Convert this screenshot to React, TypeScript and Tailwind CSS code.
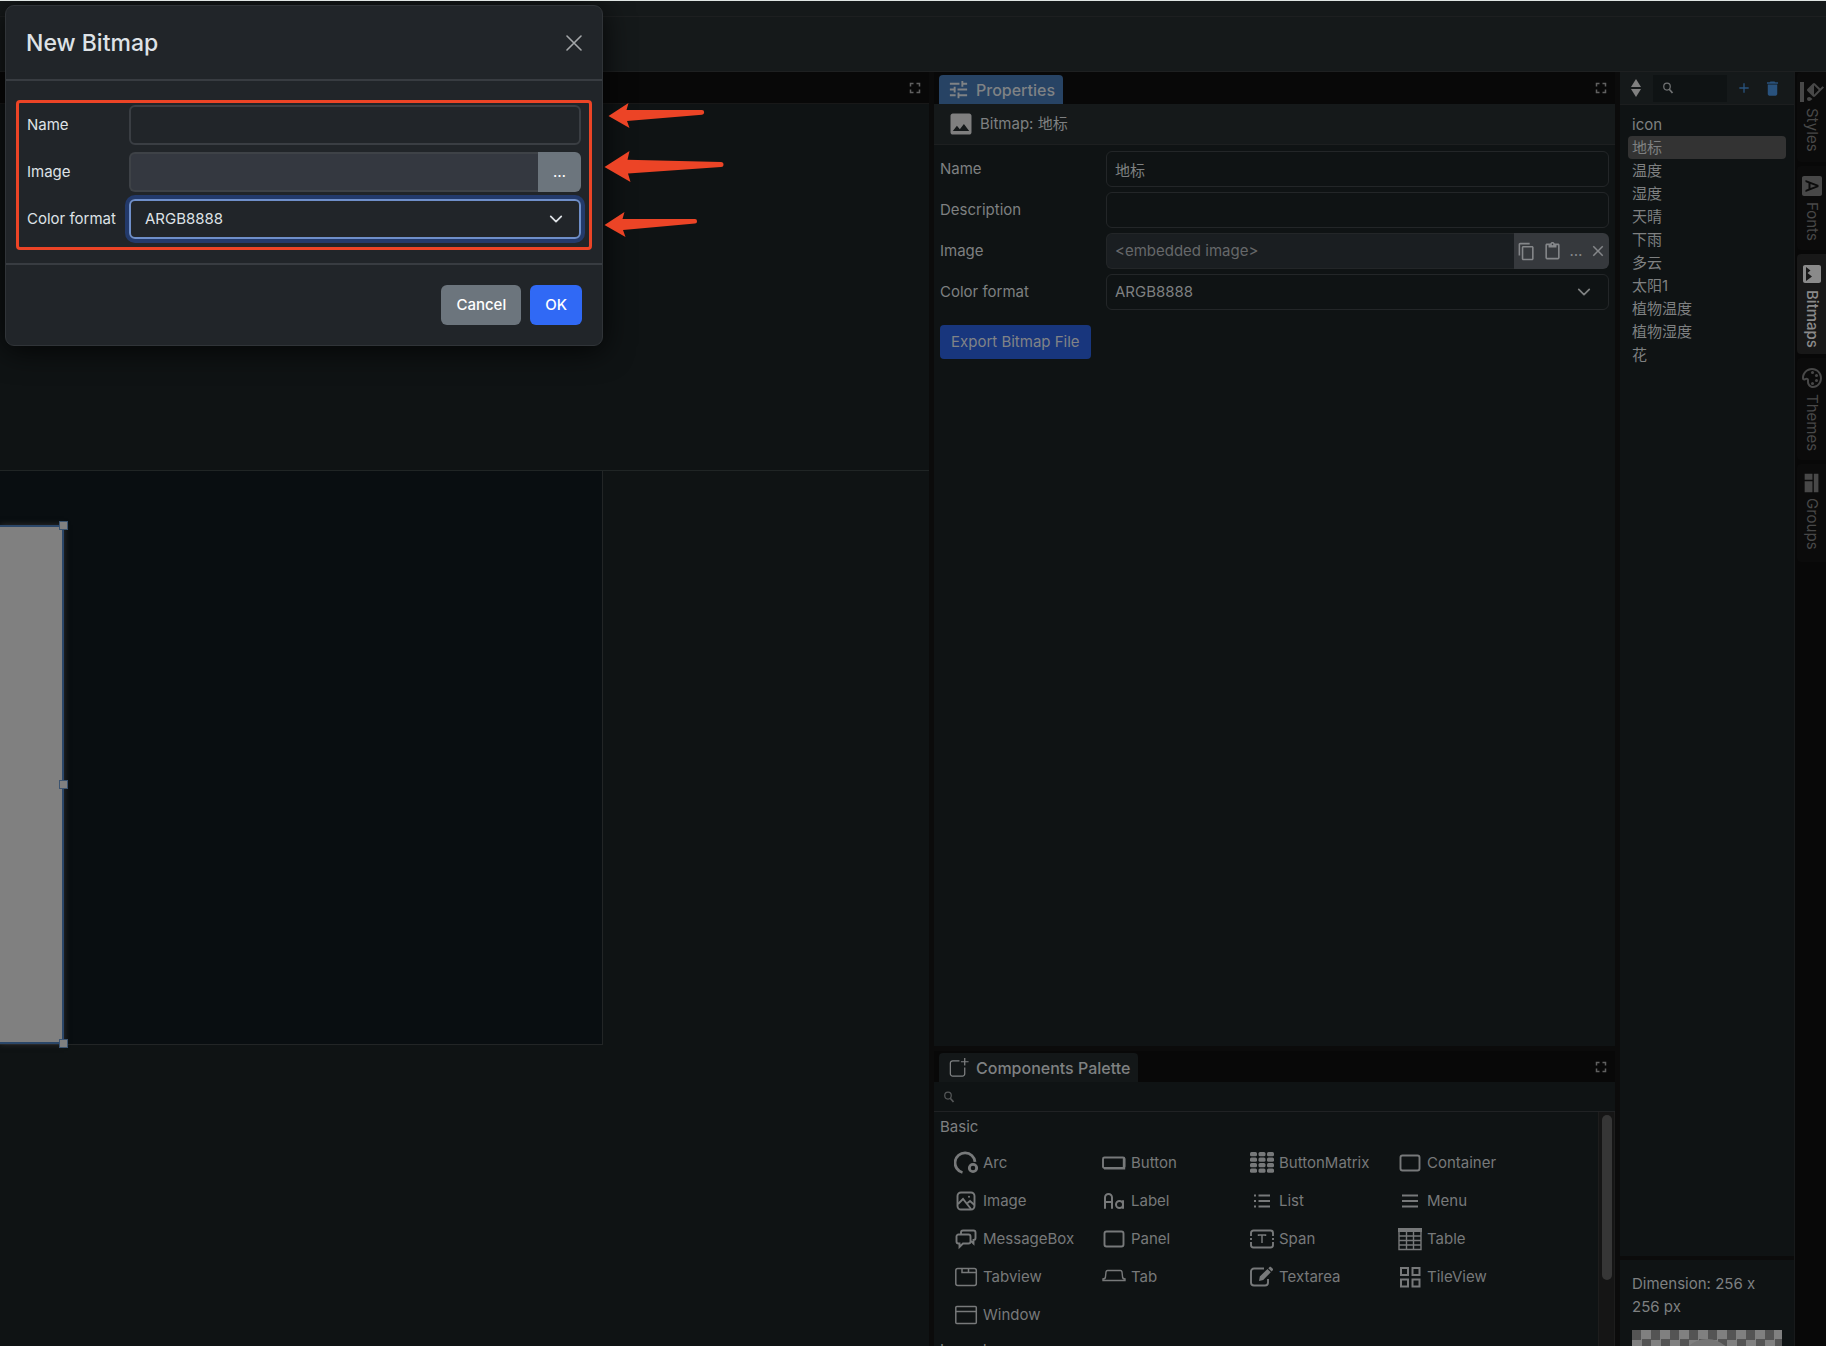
import { useState, type ReactNode } from "react"
import {
    MdAdd,
    MdClose,
    MdContentCopy,
    MdContentPaste,
    MdDelete,
    MdFontDownload,
    MdFormatColorFill,
    MdFullscreen,
    MdImage,
    MdOutlinePalette,
    MdTune,
} from "react-icons/md"
import { TbLetterCase } from "react-icons/tb"

const bitmaps = ["icon", "地标", "温度", "湿度", "天晴", "下雨", "多云", "太阳1", "植物温度", "植物湿度", "花"]

const Icon = ({ children, className = "size-6" }: { children: ReactNode; className?: string }) => (
    <svg viewBox="0 0 24 24" fill="none" stroke="currentColor" strokeWidth="1.9" className={`shrink-0 ${className}`} aria-hidden="true">
        {children}
    </svg>
)

const SearchIcon = ({ className }: { className: string }) => (
    <Icon className={className}>
        <ellipse cx="10" cy="9" rx="6.5" ry="7" strokeWidth="2.5" />
        <path d="M14.5 14.5 21 22" strokeWidth="3.5" />
    </Icon>
)

const Chevron = ({ className }: { className: string }) => (
    <svg viewBox="0 0 16 16" fill="none" stroke="currentColor" strokeWidth="2" strokeLinecap="round" strokeLinejoin="round" className={className} aria-hidden="true">
        <path d="m2 5 6 6 6-6" />
    </svg>
)

const GroupsIcon = () => (
    <svg viewBox="0 0 24 24" fill="currentColor" className="size-[22px] rotate-90" aria-hidden="true">
        <path d="M2 5h20v5H2zM2 11.500h6.500V20H2zM10 11.500h12V20H10z" />
    </svg>
)

const palette: { name: string; icon: ReactNode }[] = [
    {
        name: "Arc",
        icon: (
            <Icon>
                <path d="M8.500 21.500A10 10 0 1 1 21 10.800" strokeWidth="2.800" />
                <circle cx="19" cy="17" r="3.700" strokeWidth="2.800" />
            </Icon>
        ),
    },
    {
        name: "Button",
        icon: (
            <Icon>
                <rect x="1" y="6.500" width="21.500" height="10.500" rx="1.500" />
                <path d="M2 17.200h20V7" strokeWidth="2.400" />
            </Icon>
        ),
    },
    {
        name: "ButtonMatrix",
        icon: (
            <Icon>
                {[1, 6.5, 12, 17.5].map((y) =>
                    [0, 8.5, 17].map((x) => <rect key={`${x}-${y}`} x={x} y={y} width="7" height="4.200" rx="1.500" fill="currentColor" stroke="none" />)
                )}
            </Icon>
        ),
    },
    {
        name: "Container",
        icon: (
            <Icon>
                <rect x="2.500" y="4.500" width="19" height="15" rx="2" />
            </Icon>
        ),
    },
    {
        name: "Image",
        icon: (
            <Icon>
                <rect x="3.500" y="3.500" width="17" height="17" rx="3.500" />
                <circle cx="15" cy="7.800" r="1" fill="currentColor" stroke="none" />
                <path d="m4 15 5-5 8 10M13.500 14l2.500-2 4.500 4" />
            </Icon>
        ),
    },
    { name: "Label", icon: <TbLetterCase className="size-6 shrink-0" /> },
    {
        name: "List",
        icon: (
            <Icon>
                <path d="M8.500 6.500H20M8.500 12H20M8.500 17.500H20" />
                <path d="M4 6.500h2M4 12h2M4 17.500h2" strokeWidth="2" />
            </Icon>
        ),
    },
    {
        name: "Menu",
        icon: (
            <Icon>
                <path d="M4 6.500h16M4 12h16M4 17.500h16" />
            </Icon>
        ),
    },
    {
        name: "MessageBox",
        icon: (
            <Icon>
                <path d="M4.500 7.500h10a2 2 0 0 1 2 2v5a2 2 0 0 1-2 2H9L5.500 20v-3.500h-1a2 2 0 0 1-2-2v-5a2 2 0 0 1 2-2z" />
                <path d="M7 7V5.500a2 2 0 0 1 2-2h10.500a2 2 0 0 1 2 2V11a2 2 0 0 1-2 2v3.500L17 14" />
            </Icon>
        ),
    },
    {
        name: "Panel",
        icon: (
            <Icon>
                <rect x="2.500" y="4.500" width="19" height="15" rx="2" />
            </Icon>
        ),
    },
    {
        name: "Span",
        icon: (
            <Icon>
                <path d="M1 9V6a2.500 2.500 0 0 1 2.500-2.500h17A2.500 2.500 0 0 1 23 6v3M1 15v3a2.500 2.500 0 0 0 2.500 2.500h17A2.500 2.500 0 0 0 23 18v-3M1 11v2M23 11v2" />
                <path d="M8.500 9V8h7v1M12 8v8" strokeWidth="1.500" />
            </Icon>
        ),
    },
    {
        name: "Table",
        icon: (
            <Icon>
                <path d="M0 1h24v4H0z" fill="currentColor" stroke="none" />
                <path d="M1 2v20.500h22V2M1 9h22M1 13.500h22M1 18h22M8.500 4v18M15.500 4v18" strokeWidth="1.400" />
            </Icon>
        ),
    },
    {
        name: "Tabview",
        icon: (
            <Icon>
                <rect x="1.800" y="3.500" width="20.500" height="17" rx="2" strokeWidth="1.500" />
                <path d="M8 4v3.500h14M14.500 4v3.500" strokeWidth="1.500" />
            </Icon>
        ),
    },
    {
        name: "Tab",
        icon: (
            <Icon>
                <path d="M1 15.500h22v-1.500c-2 0-2.500-1-2.500-2.500L20 7c-.2-1-.8-1.500-1.500-1.500h-13C4.700 5.500 4.200 6 4 7l-.5 4.500C3.500 13 3 14 1 14z" strokeWidth="1.400" />
            </Icon>
        ),
    },
    {
        name: "Textarea",
        icon: (
            <Icon>
                <path d="M14 3.500H4A3 3 0 0 0 1 6.500v11a3 3 0 0 0 3 3h11a3 3 0 0 0 3-3V14" />
                <path d="m9 16 .8-4.500L17.500 4l3.300 3.300-7.600 7.700zM18.300 3.200l1-1c.6-.6 1.300-.6 1.900 0l1.400 1.400c.6.600.6 1.300 0 1.900l-1 1z" fill="currentColor" stroke="none" />
            </Icon>
        ),
    },
    {
        name: "TileView",
        icon: (
            <Icon>
                {[3, 14.5].map((y) => [3, 14.5].map((x) => <rect key={`${x}-${y}`} x={x} y={y} width="7" height="7" strokeWidth="2" />))}
            </Icon>
        ),
    },
    {
        name: "Window",
        icon: (
            <Icon>
                <rect x="1.800" y="3.500" width="20.500" height="17" rx="1" strokeWidth="1.500" />
                <path d="M2 8.500h20" strokeWidth="1.500" />
            </Icon>
        ),
    },
]

const sideTabs = [
    { name: "Styles", size: "h-[90px]", icon: <MdFormatColorFill className="size-6 rotate-90" /> },
    { name: "Fonts", size: "h-[84px]", icon: <MdFontDownload className="size-6 rotate-90" /> },
    { name: "Bitmaps", size: "h-[100px]", icon: <MdImage className="size-6 rotate-90" /> },
    { name: "Themes", size: "h-[102px]", icon: <MdOutlinePalette className="size-6 rotate-90" /> },
    { name: "Groups", size: "h-[98px]", icon: <GroupsIcon /> },
]

const MaximizeButton = () => (
    <button aria-label="Maximize" className="mr-[5px] text-[#606060]">
        <MdFullscreen className="size-[18px]" />
    </button>
)

const EditorPanel = () => (
    <section className="flex min-w-0 flex-1 flex-col">
        <div className="flex h-8 shrink-0 items-center justify-end border-b border-[#181818] bg-[#080808]">
            <MaximizeButton />
        </div>
        <div className="min-h-0 flex-1 overflow-hidden pt-[366px]">
            <div className="border-t border-[#202525]">
                <div className="h-[574px] w-[603px] border-r border-b border-[#222526] bg-[#090e11] pt-[54px]">
                    <div className="relative h-[519px] w-16 border-y-2 border-r-2 border-[#2b4769] bg-[#808080] shadow-[0_0_6px_#303030]">
                        <i className="absolute -top-[6px] -right-[6px] size-[9px] border border-[#3c5470] bg-[#808080]" />
                        <i className="absolute top-[253px] -right-[6px] size-[9px] border border-[#3c5470] bg-[#808080]" />
                        <i className="absolute -right-[6px] -bottom-[6px] size-[9px] border border-[#3c5470] bg-[#808080]" />
                    </div>
                </div>
            </div>
        </div>
    </section>
)

const field = "h-9 w-full min-w-0 rounded-md border border-[#232628] bg-transparent px-2 outline-none"

const PropertiesPanel = () => {
    const [name, setName] = useState("地标")

    return (
        <section className="flex min-h-0 flex-1 flex-col">
            <div className="flex h-8 shrink-0 items-end justify-between bg-[#080808] pl-[5px]">
                <button className="flex h-[29px] items-center gap-[6px] rounded-t-sm bg-[#274364] px-2 text-base font-medium text-[#7f8285]">
                    <MdTune className="size-[23px]" />
                    Properties
                </button>
                <div className="flex h-full items-center">
                    <MaximizeButton />
                </div>
            </div>
            <div className="flex h-[41px] shrink-0 items-center gap-[5px] border-b border-[#1d1f20] bg-[#15191a] px-[13px]">
                <MdImage className="size-7 text-[#7f7f7f]" />
                Bitmap: 地标
            </div>
            <div className="px-[6px] pt-[6px]">
                <div className="grid grid-cols-[166px_1fr] items-center gap-y-[5px]">
                    <label htmlFor="prop-name">Name</label>
                    <input id="prop-name" className={field} value={name} onChange={(e) => setName(e.target.value)} />
                    <label htmlFor="prop-description">Description</label>
                    <input id="prop-description" className={field} />
                    <label htmlFor="prop-image">Image</label>
                    <div className="flex h-9">
                        <input
                            id="prop-image"
                            readOnly
                            value="<embedded image>"
                            className="min-w-0 flex-1 rounded-l-md border border-r-0 border-[#232628] bg-[#1a1e21] px-2 text-[#66686a] outline-none"
                        />
                        <div className="flex items-center gap-1 rounded-r-md bg-[#36393d] px-[2px] text-[#85878a]">
                            <button aria-label="Copy" className="flex w-[21px] justify-center">
                                <MdContentCopy className="size-[19px]" />
                            </button>
                            <button aria-label="Paste" className="flex w-[22px] justify-center">
                                <MdContentPaste className="size-[19px]" />
                            </button>
                            <button aria-label="Browse" className="w-[18px]">…</button>
                            <button aria-label="Clear" className="flex w-[18px] justify-center">
                                <MdClose className="size-[18px]" />
                            </button>
                        </div>
                    </div>
                    <label htmlFor="prop-format">Color format</label>
                    <div className="relative">
                        <select id="prop-format" className={`${field} appearance-none`}>
                            <option>ARGB8888</option>
                        </select>
                        <Chevron className="pointer-events-none absolute top-[11px] right-[18px] size-[14px]" />
                    </div>
                </div>
                <button className="mt-[15px] h-[34px] rounded-sm bg-[#18367d] px-[11px] text-[#808387]">Export Bitmap File</button>
            </div>
        </section>
    )
}

const ComponentsPalette = () => (
    <section className="flex h-[295px] shrink-0 flex-col">
        <div className="flex h-[31px] shrink-0 items-end justify-between bg-[#080808] pl-[5px]">
            <button className="flex h-[29px] items-center gap-[6px] rounded-t-sm bg-[#131718] px-2 text-base font-medium text-[#7f8182]">
                <Icon className="size-[23px]">
                    <path d="M13 5H6a2.500 2.500 0 0 0-2.500 2.500v11A2.500 2.500 0 0 0 6 21h10a2.500 2.500 0 0 0 2.500-2.500V12M18.500 2v8M14.500 6h8" strokeWidth="1.300" />
                </Icon>
                Components Palette
            </button>
            <div className="flex h-full items-center">
                <MaximizeButton />
            </div>
        </div>
        <label className="flex h-[30px] shrink-0 items-center gap-2 border-b border-[#202224] pl-[9px]">
            <SearchIcon className="size-3 text-[#555758]" />
            <input aria-label="Search components" className="min-w-0 flex-1 bg-transparent outline-none" />
        </label>
        <div className="flex min-h-0 flex-1">
            <div className="min-w-0 flex-1 overflow-hidden px-[6px] pt-[3px]">
                <h3 className="h-[29px] leading-[23px]">Basic</h3>
                <div className="grid grid-cols-[repeat(4,148px)] pl-[14px]">
                    {palette.map((item) => (
                        <button key={item.name} className="flex h-[38px] items-center gap-[5px] text-[#77797a]">
                            {item.icon}
                            {item.name}
                        </button>
                    ))}
                </div>
                <h3 className="pt-1 leading-[23px]">Layout</h3>
            </div>
            <div className="w-[17px] border-x border-[#1d1d1d] bg-[#151515] px-[3px] pt-[3px]">
                <div className="h-[165px] w-[10px] rounded-full bg-[#363636]" />
            </div>
        </div>
    </section>
)

const BitmapsList = () => {
    const [selected, setSelected] = useState("地标")

    return (
        <aside className="flex w-[175px] shrink-0 flex-col border-r border-[#181a1b]">
            <div className="flex h-[33px] shrink-0 items-center border-b border-[#1c1e1f] bg-[#15191a] pl-[11px]">
                <button aria-label="Sort" className="text-[#808080]">
                    <svg viewBox="0 0 10 18" fill="currentColor" className="h-[18px] w-[10px]" aria-hidden="true">
                        <path d="M5 0l5 8H0zM0 10h10l-5 8z" />
                    </svg>
                </button>
                <label className="ml-3 flex h-[27px] w-[74px] items-center bg-[#0f1314] pl-[9px]">
                    <SearchIcon className="size-3 text-[#707273]" />
                    <input aria-label="Search bitmaps" className="w-12 bg-transparent outline-none" />
                </label>
                <button aria-label="Add" className="ml-[9px] text-[#29527d]">
                    <MdAdd className="size-4" />
                </button>
                <button aria-label="Delete" className="ml-[11px] text-[#29527d]">
                    <MdDelete className="size-[19px]" />
                </button>
            </div>
            <ul className="min-h-0 flex-1 overflow-hidden px-2 pt-2">
                {bitmaps.map((name) => (
                    <li key={name}>
                        <button
                            onClick={() => setSelected(name)}
                            className={`h-[23px] w-full rounded-sm px-1 text-left leading-[23px] ${selected === name ? "bg-[#333333]" : ""}`}
                        >
                            {name}
                        </button>
                    </li>
                ))}
            </ul>
            <div className="h-[90px] shrink-0 overflow-hidden border-t-4 border-[#0b0b0b] px-3 pt-3 leading-[23px]">
                <p>Dimension: 256 x 256 px</p>
                <div className="mt-3 h-[150px] bg-[conic-gradient(#808080_25%,#545454_0_50%,#808080_0_75%,#545454_0)] bg-size-[19px_19px] pt-[9px]">
                    <div className="mx-auto h-14 w-[56px] rounded-[50%] bg-[#757575]" />
                </div>
            </div>
        </aside>
    )
}

const SideTabs = () => (
    <nav className="flex w-[31px] shrink-0 flex-col gap-1 bg-[#080808] pl-[2px]">
        {sideTabs.map((tab) => (
            <button
                key={tab.name}
                className={`flex shrink-0 flex-col items-center gap-1 rounded-l-sm pt-2 ${tab.size} ${
                    tab.name === "Bitmaps" ? "bg-[#181818] font-medium text-[#8a8a8a]" : "bg-[#0b0b0b] text-[#484848]"
                }`}
            >
                {tab.icon}
                <span className="[writing-mode:vertical-rl]">{tab.name}</span>
            </button>
        ))}
    </nav>
)

const modalField = "h-10 w-full min-w-0 rounded-md border-2 border-[#3a3e43] bg-transparent px-[14px] outline-none"

const NewBitmapDialog = () => (
    <div
        role="dialog"
        aria-labelledby="dialog-title"
        className="absolute top-1 left-[5px] w-[598px] rounded-[9px] border border-[#303438] bg-[#212529] text-[#dee2e6] shadow-[0_4px_30px_rgba(0,0,0,0.8)]"
    >
        <header className="flex h-[75px] items-center justify-between border-b-2 border-[#383c41] px-5">
            <h2 id="dialog-title" className="text-[23px] font-medium">New Bitmap</h2>
            <button aria-label="Close" className="text-[#a4a7a9]">
                <svg viewBox="0 0 16 16" fill="none" stroke="currentColor" strokeWidth="1.600" strokeLinecap="round" className="size-4" aria-hidden="true">
                    <path d="m1 1 14 14M15 1 1 15" />
                </svg>
            </button>
        </header>
        <form onSubmit={(e) => e.preventDefault()}>
            <div className="relative grid grid-cols-[102px_1fr] items-center gap-y-[7px] px-[21px] pt-6 pb-6">
                <label htmlFor="new-name">Name</label>
                <input id="new-name" className={modalField} />
                <label htmlFor="new-image">Image</label>
                <div className="flex h-10">
                    <input id="new-image" readOnly className="min-w-0 flex-1 rounded-l-md border-2 border-r-0 border-[#3e4247] bg-[#343840] outline-none" />
                    <button type="button" aria-label="Browse image" className="w-[43px] rounded-r-md bg-[#6c757d] text-white">…</button>
                </div>
                <label htmlFor="new-format">Color format</label>
                <div className="relative">
                    <select id="new-format" className={`${modalField} appearance-none border-[#6f8fc9] ring-4 ring-[#233a6b]`}>
                        <option>ARGB8888</option>
                    </select>
                    <Chevron className="pointer-events-none absolute top-[13px] right-[18px] size-[14px]" />
                </div>
                <div className="pointer-events-none absolute inset-x-[10px] top-[19px] bottom-[13px] rounded-sm border-[3px] border-[#ec4426]" />
            </div>
            <footer className="flex h-[82px] items-center justify-end gap-[9px] border-t-2 border-[#383c41] px-5">
                <button type="button" className="h-10 rounded-md bg-[#6c757d] px-[15px] font-medium text-white">Cancel</button>
                <button type="submit" className="h-10 rounded-md bg-[#3069f5] px-[15px] font-medium text-white">OK</button>
            </footer>
        </form>
    </div>
)

const Arrows = () => (
    <svg viewBox="0 0 120 136" fill="#ec4426" className="pointer-events-none absolute top-[101px] left-[604px] h-[136px] w-[120px]" aria-hidden="true">
        <path d="M4.500 14 24.500 1 22.500 8H98a2 2.200 0 0 1 0 4.700L23 19l2.500 7z" />
        <path d="M.5 65 25.500 49 23.500 57.700 117 60a2.500 2.500 0 0 1 0 5L24 71.500l2.500 8.500z" />
        <path d="M.5 123 20.500 110 18.500 117H91a2 2.200 0 0 1 0 4.500L19 128l2.500 7z" />
    </svg>
)

const App = () => {
    return (
        <div className="relative flex h-screen flex-col overflow-hidden border-t border-[#dfe5e3] bg-[#0f1314] font-['Inter','Noto_Sans_CJK_SC',sans-serif] text-[15px] leading-5 text-[#7e8081] [font-feature-settings:'calt'_0]">
            <header className="h-[71px] shrink-0 border-b border-[#1e2021] bg-[#15191a]">
                <div className="h-4 border-b border-[#1d1f20]" />
            </header>
            <main className="flex min-h-0 flex-1">
                <EditorPanel />
                <div className="w-[5px] shrink-0 bg-[#0b0b0b]" />
                <div className="flex w-[681px] shrink-0 flex-col">
                    <PropertiesPanel />
                    <div className="h-[5px] shrink-0 bg-[#0b0b0b]" />
                    <ComponentsPalette />
                </div>
                <div className="w-[5px] shrink-0 bg-[#0b0b0b]" />
                <BitmapsList />
                <SideTabs />
            </main>
            <NewBitmapDialog />
            <Arrows />
        </div>
    )
}

export default App
